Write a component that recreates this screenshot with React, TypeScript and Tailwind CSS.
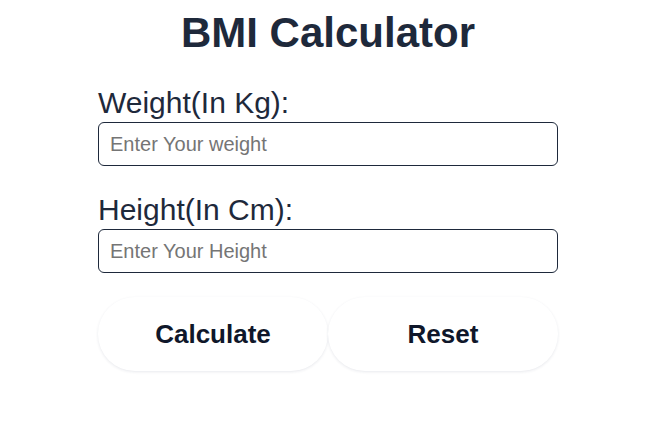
import React from "react";

export default function App() {
  return (
    <div className="min-h-[426px] w-full bg-white" style={{ fontFamily: '"Liberation Sans", Arial, sans-serif' }}>
      <div className="mx-auto flex w-[460px] flex-col pt-[9px]">
        <h1 className="text-center text-[42px] font-bold leading-[48px] text-[#1e293b]">BMI Calculator</h1>
        <label className="mt-[28px] text-[30px] leading-[36px] text-[#1e293b]">Weight(In Kg):</label>
        <input
          type="text"
          placeholder="Enter Your weight"
          className="mt-[1px] h-[44px] w-full rounded-[6px] border border-[#1e293b] px-[11px] text-[20px] text-[#1e293b] placeholder:text-[#757575] outline-none"
        />
        <label className="mt-[26px] text-[30px] leading-[36px] text-[#1e293b]">Height(In Cm):</label>
        <input
          type="text"
          placeholder="Enter Your Height"
          className="mt-[1px] h-[44px] w-full rounded-[6px] border border-[#1e293b] px-[11px] text-[20px] text-[#1e293b] placeholder:text-[#757575] outline-none"
        />
        <div className="mt-[24px] flex">
          <button className="h-[74px] flex-1 rounded-full bg-white text-[26px] font-bold text-[#0f172a] shadow-[0_1px_3px_rgba(30,41,80,0.10)]">
            Calculate
          </button>
          <button className="h-[74px] flex-1 rounded-full bg-white text-[26px] font-bold text-[#0f172a] shadow-[0_1px_3px_rgba(30,41,80,0.10)]">
            Reset
          </button>
        </div>
      </div>
    </div>
  );
}
